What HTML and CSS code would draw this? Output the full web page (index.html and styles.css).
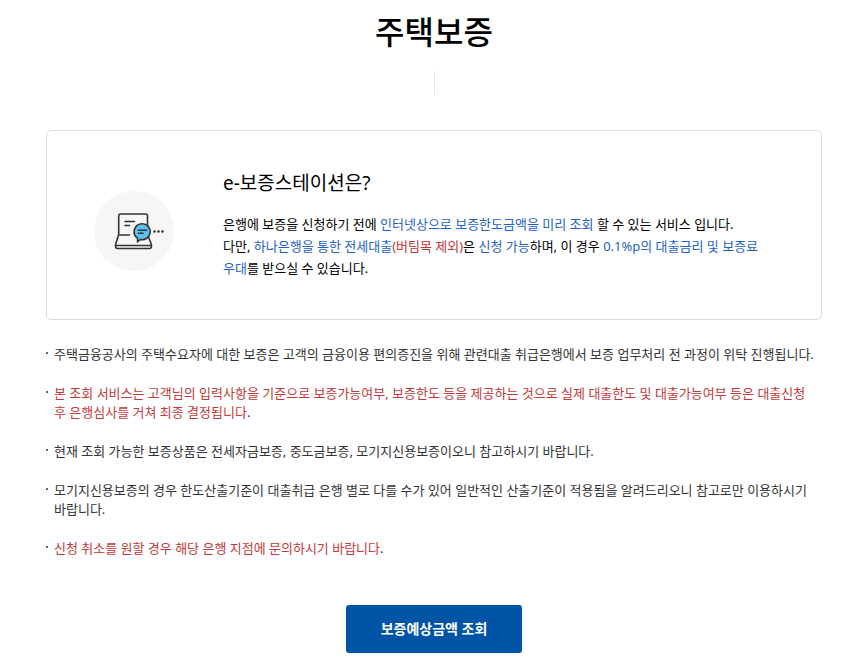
FILE: index.html
```
<!DOCTYPE html>
<html lang="ko">
<head>
    <meta charset="UTF-8">
    <meta name="viewport" content="width=device-width, initial-scale=1.0">
    <title>주택보증</title>
    <link rel="stylesheet" href="styles.css">
</head>
<body>
    <main class="content">
        <h1 class="page-title">주택보증</h1>

        <!-- e-보증스테이션 안내 -->
        <section class="info-box">
            <div class="info-icon">
                <svg width="80" height="80" viewBox="0 0 80 80" fill="none" stroke="#333" stroke-width="1.6" stroke-linecap="round" stroke-linejoin="round" aria-hidden="true">
                    <path d="M24.700 44V25a2 2 0 0 1 2-2H51.500a2 2 0 0 1 2 2V44"/>
                    <path d="M24.700 43.500L21.600 53.500V55.500a2 2 0 0 0 2 2H55.400a2 2 0 0 0 2-2V53.500L53.500 43.500"/>
                    <path d="M22 54.500H57M26 44H35.500M31 30.500H40.500M31 34.500H35.500"/>
                    <path d="M48.200 32.700a8 8 0 1 1-1.800 15.800L43.500 51V47.200A8 8 0 0 1 48.200 32.700z" fill="#5cc0f0"/>
                    <path d="M44.500 39.300H52.500M44.500 42.300H49"/>
                    <g fill="#333" stroke="none">
                        <circle cx="60.500" cy="40.500" r="1.300"/>
                        <circle cx="64.500" cy="40.500" r="1.300"/>
                        <circle cx="68.500" cy="40.500" r="1.300"/>
                    </g>
                </svg>
            </div>
            <div class="info-text">
                <h2>e-보증스테이션은?</h2>
                <p>
                    은행에 보증을 신청하기 전에 <span class="blue">인터넷상으로 보증한도금액을 미리 조회</span> 할 수 있는 서비스 입니다.<br>
                    다만, <span class="blue">하나은행을 통한 전세대출</span><span class="red">(버팀목 제외)</span>은 <span class="blue">신청 가능</span>하며, 이 경우 <span class="blue">0.1%p의 대출금리 및 보증료 우대</span>를 받으실 수 있습니다.
                </p>
            </div>
        </section>

        <!-- 유의사항 -->
        <ul class="notice">
            <li>주택금융공사의 주택수요자에 대한 보증은 고객의 금융이용 편의증진을 위해 관련대출 취급은행에서 보증 업무처리 전 과정이 위탁 진행됩니다.</li>
            <li><span class="red">본 조회 서비스는 고객님의 입력사항을 기준으로 보증가능여부, 보증한도 등을 제공하는 것으로 실제 대출한도 및 대출가능여부 등은 대출신청 후 은행심사를 거쳐 최종 결정됩니다</span>.</li>
            <li>현재 조회 가능한 보증상품은 전세자금보증, 중도금보증, 모기지신용보증이오니 참고하시기 바랍니다.</li>
            <li>모기지신용보증의 경우 한도산출기준이 대출취급 은행 별로 다를 수가 있어 일반적인 산출기준이 적용됨을 알려드리오니 참고로만 이용하시기 바랍니다.</li>
            <li><span class="red">신청 취소를 원할 경우 해당 은행 지점에 문의하시기 바랍니다</span>.</li>
        </ul>

        <div class="btn-area">
            <button type="button" class="btn">보증예상금액 조회</button>
        </div>
    </main>
</body>
</html>
```
FILE: styles.css
```
* {
    box-sizing: border-box;
}
body {
    margin: 0;
    background: #fff;
    color: #333;
    font-family: "Noto Sans", "Noto Sans CJK KR", sans-serif;
    font-size: 13px;
    line-height: 19px;
    word-break: keep-all;
}
h1, h2, p, ul {
    margin: 0;
    padding: 0;
}
.content {
    padding: 8px 23px 12px 46px;
}
.page-title {
    color: #000;
    font-size: 32px;
    font-weight: 500;
    line-height: 48px;
    text-align: center;
}
.page-title::after {
    content: "";
    display: block;
    width: 1px;
    height: 24px;
    margin: 15px auto 0;
    background: #e5e5e5;
}
.info-box {
    display: flex;
    align-items: center;
    gap: 49px;
    margin-top: 35px;
    padding: 38px 47px 40px;
    border: 1px solid #ddd;
    border-radius: 5px;
}
.info-icon {
    flex: none;
    width: 80px;
    height: 80px;
    margin-top: 14px;
    border-radius: 50%;
    background: #f6f6f6;
}
.info-icon svg {
    display: block;
}
.info-text {
    color: #000;
}
.info-text h2 {
    margin-bottom: 16px;
    font-size: 19px;
    font-weight: 400;
    line-height: 28px;
}
.info-text p {
    line-height: 22px;
}
.blue {
    color: #1e62c8;
}
.red {
    color: #c23838;
}
.notice {
    margin-top: 25px;
    list-style: none;
}
.notice li {
    position: relative;
    padding: 0 4px 0 8px;
}
.notice li + li {
    margin-top: 20px;
}
.notice li::before {
    content: "";
    position: absolute;
    top: 7px;
    left: 0;
    width: 2px;
    height: 2px;
    background: #666;
}
.btn-area {
    margin-top: 47px;
    text-align: center;
}
.btn {
    padding: 14px 35px;
    border: 0;
    border-radius: 3px;
    background: #0054a6;
    color: #fff;
    font-family: inherit;
    font-size: 14px;
    font-weight: 700;
    line-height: 20px;
    cursor: pointer;
}
```
